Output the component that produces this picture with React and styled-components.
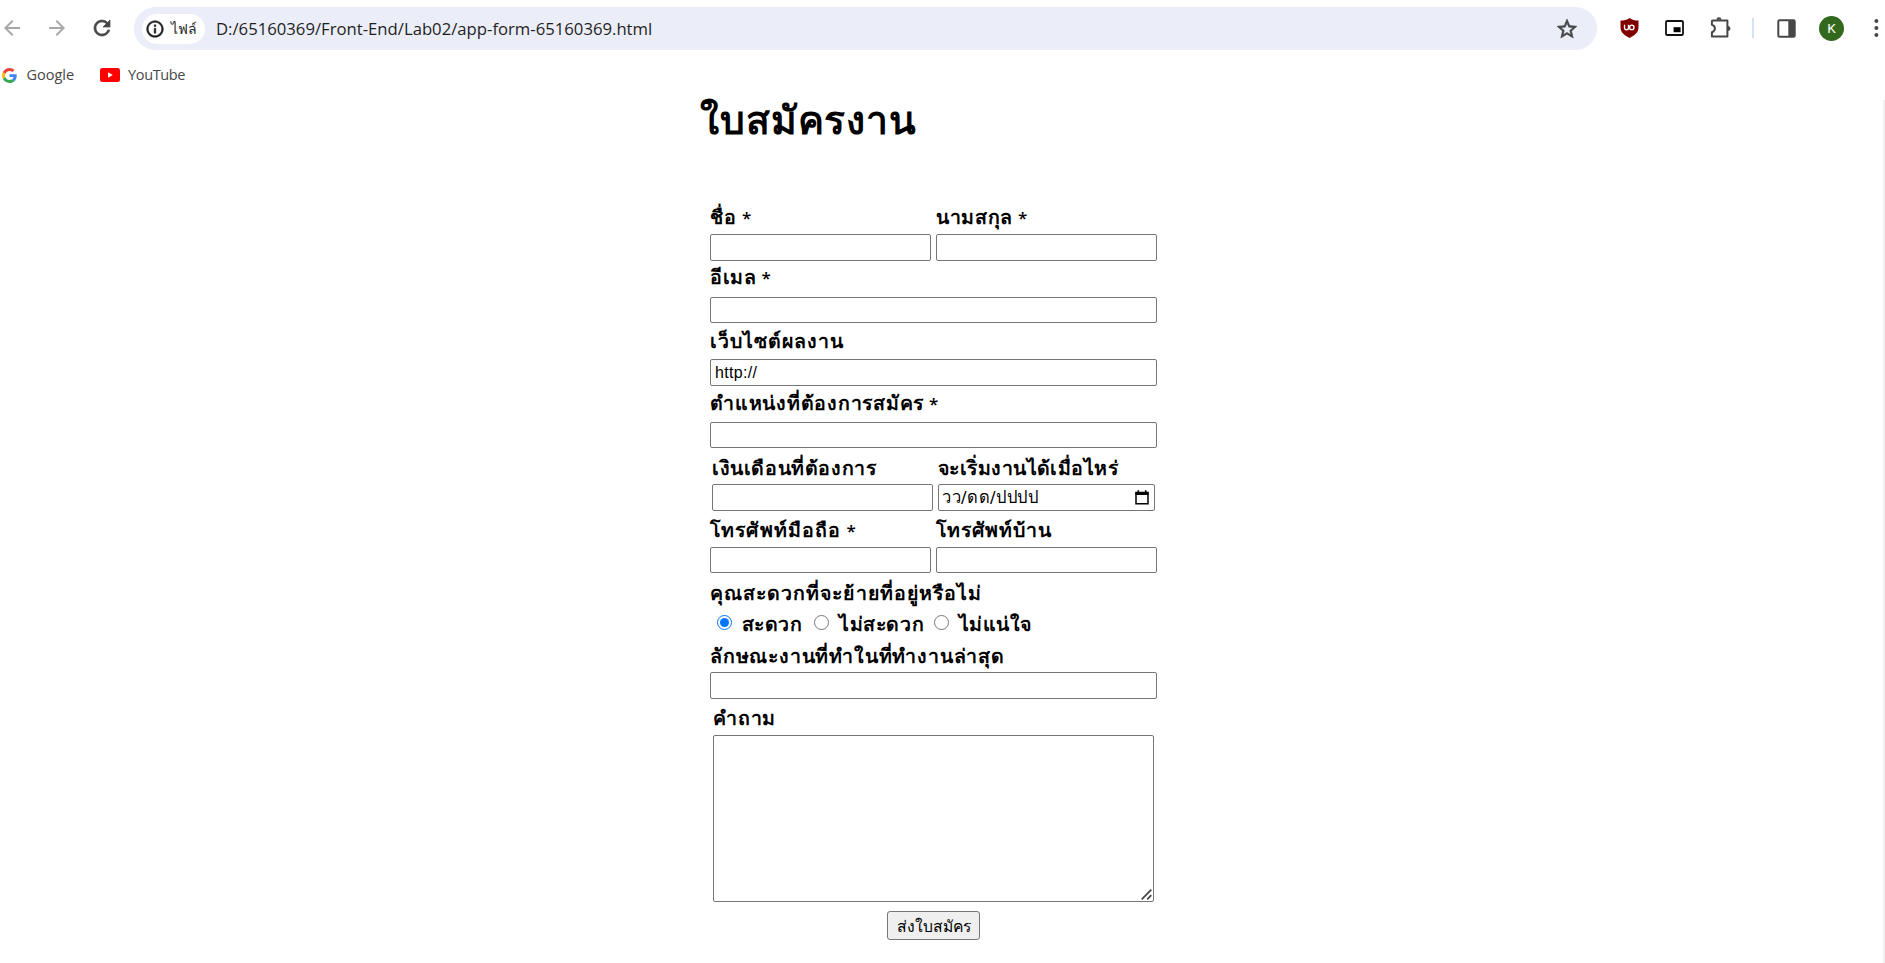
import React from 'react';
import styled, { createGlobalStyle } from 'styled-components';
import { MdArrowBack, MdArrowForward, MdRefresh, MdInfoOutline, MdStarBorder } from 'react-icons/md';

const Global = createGlobalStyle`
  * { box-sizing: border-box; }
  html, body { margin: 0; height: 963px; overflow: hidden; background: #fff; }
`;
const uiFont = `'Open Sans', 'Noto Sans', sans-serif`;
const formFont = `'DejaVu Sans', Tahoma, sans-serif`;

const Page = styled.div`
  width: 1885px;
  height: 963px;
  display: flex;
  flex-direction: column;
`;
const Toolbar = styled.header`
  height: 57px;
  padding: 7px 0 7px 0;
  display: flex;
  align-items: center;
`;
const NavGroup = styled.div`
  width: 134px;
  flex: none;
  display: flex;
  gap: 21px;
  height: 43px;
  align-items: center;
  padding-bottom: 1px;
`;
const Glyph = styled.span`
  display: flex;
  flex: none;
  color: ${(p) => p.$color};
  svg {
    width: ${(p) => p.$size || 24}px;
    height: ${(p) => p.$size || 24}px;
    stroke-width: ${(p) => p.$bold || 0};
  }
  path[fill='none'] { stroke: none; }
`;
const AddressBar = styled.div`
  width: 1463px;
  flex: none;
  height: 43px;
  border-radius: 22px;
  background: #ebeef8;
  display: flex;
  align-items: center;
  padding: 0 18px 0 8px;
`;
const Chip = styled.div`
  width: 63px;
  height: 30px;
  border-radius: 15px;
  background: #fff;
  display: flex;
  align-items: center;
  padding-left: 3px;
  gap: 6px;
  font: 14px/30px ${uiFont};
  color: #1f1f1f;
`;
const Url = styled.span`
  margin-left: 11px;
  flex: 1;
  font: 16.7px/43px ${uiFont};
  color: #1f1f1f;
`;
const Actions = styled.div`
  flex: 1;
  height: 43px;
  display: flex;
  align-items: center;
  padding: 0 0 1px 23px;
`;
const Slot = styled.span`
  width: ${(p) => p.$w}px;
  display: flex;
  align-items: center;
  flex: none;
`;
const Divider = styled.span`
  width: 2px;
  height: 20px;
  background: #d3e3fd;
`;
const Avatar = styled.span`
  width: 25px;
  height: 25px;
  border-radius: 50%;
  background: #33691e;
  color: #fff;
  font: 13.5px/25px Roboto, sans-serif;
  text-align: center;
`;
const Bookmarks = styled.nav`
  height: 43px;
  display: flex;
  padding: 0 1.5px;
  font: 14.5px/36px ${uiFont};
  color: #474747;
`;
const Bookmark = styled.span`
  display: flex;
  align-items: center;
  height: 36px;
  gap: ${(p) => p.$gap}px;
  width: ${(p) => p.$w}px;
  letter-spacing: ${(p) => p.$spacing}px;
`;
const Viewport = styled.main`
  flex: 1;
  border-right: 2px solid #f1f1f1;
  padding-left: 701px;
`;
const Title = styled.h1`
  margin: 0 0 0 -1px;
  height: 106px;
  font: bold 39px/42px ${formFont};
  color: #000;
  white-space: nowrap;
  letter-spacing: 0.9px;
`;
const Form = styled.form`
  width: 447px;
  margin-left: 9px;
  display: flex;
  flex-direction: column;
`;
const Row = styled.div`
  display: flex;
  gap: 5px;
  margin: ${(p) => p.$top || 0}px ${(p) => p.$inset || 0}px 0;
`;
const Field = styled.label`
  display: flex;
  flex-direction: column;
  width: ${(p) => p.$w || 447}px;
`;
const Caption = styled.span`
  height: 24px;
  margin-bottom: ${(p) => p.$gap}px;
  font: bold 19.5px/24px ${formFont};
  color: #000;
  white-space: nowrap;
`;
const Label = styled.span`
  letter-spacing: ${(p) => p.$spacing || 0}px;
`;
const Star = styled.span`
  margin-left: 5px;
  font: 600 17px/20px 'Open Sans', sans-serif;
`;
const Input = styled.input`
  height: ${(p) => p.$h || 27}px;
  width: 100%;
  border: 1px solid #767676;
  border-radius: 2px;
  padding: 1px 4px;
  font: 16px 'Liberation Sans', sans-serif;
  letter-spacing: 0.3px;
  color: #000;
  background: #fff;
  outline: none;
`;
const DateBox = styled.span`
  height: 27px;
  border: 1px solid #767676;
  border-radius: 2px;
  display: flex;
  align-items: center;
  justify-content: space-between;
  padding: 0 5px 0 3px;
  font: 16.5px/25px ${formFont};
`;
const Radios = styled.div`
  display: flex;
  margin: 7px 0 0 7px;
  height: 24px;
`;
const Option = styled.label`
  display: flex;
  width: ${(p) => p.$w}px;
  font: bold 19.5px/24px ${formFont};
  white-space: nowrap;
`;
const Radio = styled.input`
  width: 15px;
  height: 15px;
  margin: 2px 10px 0 0;
  flex: none;
`;
const AreaWrap = styled.span`
  position: relative;
  display: block;
  height: 167px;
`;
const Area = styled.textarea`
  width: 441px;
  height: 167px;
  border: 1px solid #767676;
  border-radius: 2px;
  resize: none;
  display: block;
`;
const GripIcon = styled.svg`
  position: absolute;
  right: 2px;
  bottom: 2px;
  pointer-events: none;
`;
const Submit = styled.button`
  width: 93px;
  height: 29px;
  margin: 9px auto 0;
  border: 1px solid #767676;
  border-radius: 3px;
  background: #efefef;
  color: #000;
  padding: 1px 0 0;
  font: 15.7px/25px ${formFont};
  white-space: nowrap;
`;

const Grip = () => (
  <GripIcon width="11" height="11" viewBox="0 0 11 11">
    <path d="M.7 10.3L10.3.7M6.2 10.3l4.1-4.1" stroke="#444" strokeWidth="1.7" fill="none" />
  </GripIcon>
);
const Shield = () => (
  <svg width="19" height="20" viewBox="0 0 19 20">
    <path d="M9.5 0C12 2 15 2.5 18.5 2.5V9c0 5-3 8-9 11C3.5 17 .5 14 .5 9V2.5C4 2.5 7 2 9.5 0z" fill="#800000" />
    <path d="M4.5 6.8v3a2 2 0 0 0 4 0v-3M8.5 11.3V6.8" fill="none" stroke="#fff" strokeWidth="1.3" />
    <circle cx="11.8" cy="9.4" r="2.2" fill="none" stroke="#fff" strokeWidth="1.3" />
  </svg>
);
const Pip = () => (
  <svg width="19" height="16" viewBox="0 0 19 16">
    <rect x="1" y="1" width="17" height="14" rx="1.3" fill="none" stroke="#111" strokeWidth="1.8" />
    <rect x="8.6" y="7.2" width="7" height="5" fill="#000" />
  </svg>
);
const Puzzle = () => (
  <svg width="22" height="22" viewBox="0 0 22 22">
    <path
      d="M2.8 3.4H17.4V19.6H1.9V15.2Q4.9 14.2 4.9 11.5T1.9 7.8V4.3Q1.9 3.4 2.8 3.4z"
      fill="none" stroke="#474747" strokeWidth="2" strokeLinejoin="round"
    />
    <path d="M6.5 2.8a2.5 2.5 0 0 1 5 0zM18 9a2.5 2.5 0 0 1 0 5z" fill="#474747" />
  </svg>
);
const SidePanel = () => (
  <svg width="19" height="19" viewBox="0 0 19 19">
    <rect x="1.3" y="1.3" width="16.4" height="16.4" rx="1.2" fill="none" stroke="#474747" strokeWidth="2" />
    <path d="M11.3 1h6.4v17h-6.4z" fill="#474747" />
  </svg>
);
const Dots = () => (
  <svg width="21" height="20" viewBox="0 0 21 20" fill="#474747">
    <circle cx="12.4" cy="3" r="2" />
    <circle cx="12.4" cy="10" r="2" />
    <circle cx="12.4" cy="17" r="2" />
  </svg>
);
const GoogleLogo = () => (
  <svg width="15" height="15" viewBox="0 0 48 48">
    <path fill="#EA4335" d="M24 9.5c3.54 0 6.71 1.22 9.21 3.6l6.85-6.85C35.9 2.38 30.47 0 24 0 14.62 0 6.51 5.38 2.56 13.22l7.98 6.19C12.43 13.72 17.74 9.5 24 9.5z" />
    <path fill="#4285F4" d="M46.98 24.55c0-1.57-.15-3.09-.38-4.55H24v9.02h12.94c-.58 2.96-2.26 5.48-4.78 7.18l7.73 6c4.51-4.18 7.09-10.36 7.09-17.65z" />
    <path fill="#FBBC05" d="M10.53 28.59c-.48-1.45-.76-2.99-.76-4.59s.27-3.14.76-4.59l-7.98-6.19C.92 16.46 0 20.12 0 24s.92 7.54 2.56 10.78l7.97-6.19z" />
    <path fill="#34A853" d="M24 48c6.48 0 11.93-2.13 15.89-5.81l-7.73-6c-2.15 1.45-4.92 2.3-8.16 2.3-6.26 0-11.57-4.22-13.47-9.91l-7.98 6.19C6.51 42.62 14.62 48 24 48z" />
  </svg>
);
const YouTubeLogo = () => (
  <svg width="20" height="14" viewBox="0 0 20 14">
    <rect width="20" height="14" rx="2.5" fill="#f00" />
    <path d="M8 4.2l4.8 2.8L8 9.8z" fill="#fff" />
  </svg>
);
const Calendar = () => (
  <svg width="14" height="15" viewBox="0 0 14 15">
    <path d="M1 2.5h12v11.3H1z" fill="none" stroke="#000" strokeWidth="1.5" />
    <path d="M.5 2h13v3H.5zM2.5.3h1.6V2H2.5zM9.9.3h1.6V2H9.9z" />
  </svg>
);

function TextField({ label, spacing, star, gap, w, h, value }) {
  return (
    <Field $w={w}>
      <Caption $gap={gap}>
        <Label $spacing={spacing}>{label}</Label>
        {star && <Star>*</Star>}
      </Caption>
      <Input $h={h} defaultValue={value} />
    </Field>
  );
}

export default function App() {
  return (
    <Page>
      <Global />
      <Toolbar>
        <NavGroup>
          <Glyph $color="#a8a8a8"><MdArrowBack /></Glyph>
          <Glyph $color="#a8a8a8"><MdArrowForward /></Glyph>
          <Glyph $color="#474747" $bold={0.7}><MdRefresh /></Glyph>
        </NavGroup>
        <AddressBar>
          <Chip>
            <Glyph $color="#1f1f1f" $size={20} $bold={0.6}><MdInfoOutline /></Glyph>
            ไฟล์
          </Chip>
          <Url>D:/65160369/Front-End/Lab02/app-form-65160369.html</Url>
          <Glyph $color="#474747" $bold={0.6}><MdStarBorder /></Glyph>
        </AddressBar>
        <Actions>
          <Slot $w={45}><Shield /></Slot>
          <Slot $w={45}><Pip /></Slot>
          <Slot $w={42}><Puzzle /></Slot>
          <Slot $w={25}><Divider /></Slot>
          <Slot $w={42}><SidePanel /></Slot>
          <Slot $w={45}><Avatar>K</Avatar></Slot>
          <Slot $w={21}><Dots /></Slot>
        </Actions>
      </Toolbar>
      <Bookmarks>
        <Bookmark $w={98.5} $gap={10} $spacing={0}><GoogleLogo />Google</Bookmark>
        <Bookmark $w={100} $gap={8} $spacing={-0.35}><YouTubeLogo />YouTube</Bookmark>
      </Bookmarks>
      <Viewport>
        <Title>ใบสมัครงาน</Title>
        <Form>
          <Row>
            <TextField w={221} gap={4} label="ชื่อ" spacing={1} star />
            <TextField w={221} gap={4} label="นามสกุล" spacing={0.65} star />
          </Row>
          <Row $top={5}><TextField gap={7} h={26} label="อีเมล" spacing={0.6} star /></Row>
          <Row $top={7}><TextField gap={5} label="เว็บไซต์ผลงาน" spacing={1} value="http://" /></Row>
          <Row $top={6}><TextField gap={6} h={26} label="ตำแหน่งที่ต้องการสมัคร" spacing={0.75} star /></Row>
          <Row $top={9} $inset={2}>
            <TextField w={221} gap={3} label="เงินเดือนที่ต้องการ" spacing={0.6} />
            <Field $w={217}>
              <Caption $gap={3}><Label $spacing={0.45}>จะเริ่มงานได้เมื่อไหร่</Label></Caption>
              <DateBox><Label $spacing={0.5}>วว/ดด/ปปปป</Label><Calendar /></DateBox>
            </Field>
          </Row>
          <Row $top={8}>
            <TextField w={221} gap={4} h={26} label="โทรศัพท์มือถือ" spacing={1.15} star />
            <TextField w={221} gap={4} h={26} label="โทรศัพท์บ้าน" spacing={1.05} />
          </Row>
          <Row $top={9}><Caption $gap={0}><Label $spacing={1.05}>คุณสะดวกที่จะย้ายที่อยู่หรือไม่</Label></Caption></Row>
          <Radios>
            <Option $w={97}><Radio type="radio" name="move" defaultChecked /><Label $spacing={0.4}>สะดวก</Label></Option>
            <Option $w={120}><Radio type="radio" name="move" /><Label $spacing={0.6}>ไม่สะดวก</Label></Option>
            <Option $w={110}><Radio type="radio" name="move" /><Label $spacing={0.4}>ไม่แน่ใจ</Label></Option>
          </Radios>
          <Row $top={8}><TextField gap={3} label="ลักษณะงานที่ทำในที่ทำงานล่าสุด" spacing={0.8} /></Row>
          <Row $top={8} $inset={3}>
            <Field $w={441}>
              <Caption $gap={4}><Label $spacing={0.8}>คำถาม</Label></Caption>
              <AreaWrap><Area /><Grip /></AreaWrap>
            </Field>
          </Row>
          <Submit type="button">ส่งใบสมัคร</Submit>
        </Form>
      </Viewport>
    </Page>
  );
}
